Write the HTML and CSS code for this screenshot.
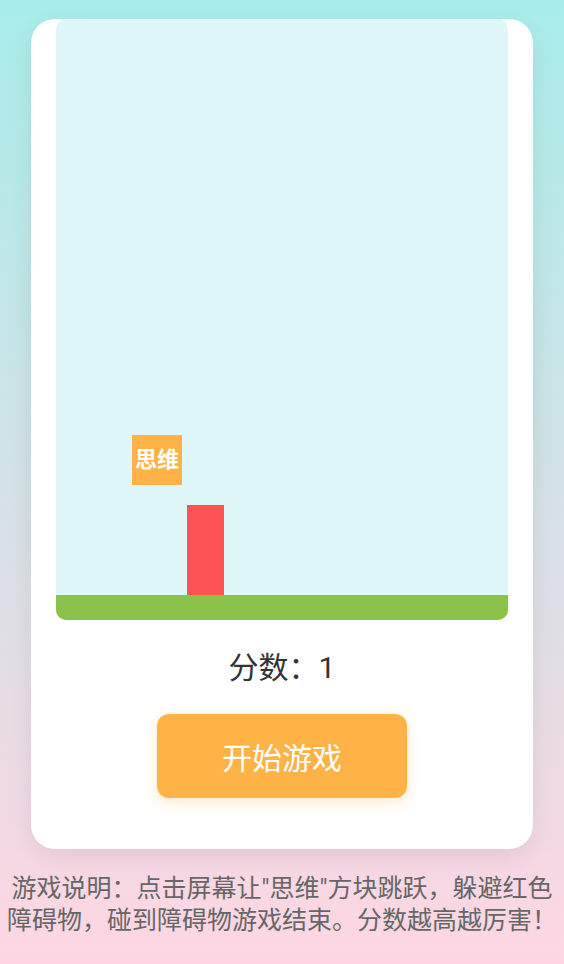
FILE: index.html
```html
<!DOCTYPE html>
<html lang="zh-CN">
<head>
  <meta charset="UTF-8">
  <meta name="viewport" content="width=device-width, initial-scale=1">
  <title>思维跳跃</title>
  <link rel="stylesheet" href="styles.css">
</head>
<body>

<div class="game-card">
  <div class="game-area" id="gameArea">
    <div class="player" id="player">思维</div>
    <div class="obstacle"></div>
    <div class="ground"></div>
  </div>

  <div class="score">分数：<span id="score">1</span></div>

  <button class="start-button" id="startBtn">开始游戏</button>
</div>

<p class="instructions">游戏说明：点击屏幕让"思维"方块跳跃，躲避红色障碍物，碰到障碍物游戏结束。分数越高越厉害！</p>

</body>
</html>
```

FILE: styles.css
```css
:root {
  --sky: #e0f7fa;
  --ground: #8bc34a;
  --orange: #ffb347;
  --red: #ff5252;
  --text: #333;
}

body {
  margin: 0;
  min-height: 100vh;
  padding-top: 19px;
  box-sizing: border-box;
  font-family: Roboto, "Noto Sans CJK SC", sans-serif;
  background: linear-gradient(to bottom, #a8edea, #fed6e3);
}

/* Card */
.game-card {
  width: 502px;
  margin: 0 auto;
  padding: 0 25px 51px;
  box-sizing: border-box;
  background-color: #fff;
  border-radius: 24px;
  box-shadow: 0 8px 24px rgba(0,0,0,0.08);
  text-align: center;
}

.game-area {
  position: relative;
  height: 601px;
  background-color: var(--sky);
  border-radius: 10px;
  overflow: hidden;
}

.player {
  position: absolute;
  left: 76px;
  top: 416px;
  width: 50px;
  height: 50px;
  background-color: var(--orange);
  color: #fff;
  font-size: 22px;
  font-weight: bold;
  line-height: 50px;
  text-align: center;
}

.obstacle {
  position: absolute;
  left: 131px;
  bottom: 25px;
  width: 37px;
  height: 90px;
  background-color: var(--red);
}

.ground {
  position: absolute;
  left: 0;
  right: 0;
  bottom: 0;
  height: 25px;
  background-color: var(--ground);
}

.score {
  margin-top: 28px;
  font-size: 30px;
  line-height: 40px;
  color: var(--text);
}

.start-button {
  display: block;
  width: 250px;
  height: 84px;
  margin: 26px auto 0;
  border: none;
  border-radius: 12px;
  background-color: var(--orange);
  color: #fff;
  font-family: inherit;
  font-size: 30px;
  box-shadow: 0 4px 14px rgba(255,179,71,0.3);
  cursor: pointer;
}

.instructions {
  margin: 24px 0 0;
  padding: 0 6px;
  text-align: center;
  font-size: 25px;
  line-height: 32px;
  color: #666;
}
```
